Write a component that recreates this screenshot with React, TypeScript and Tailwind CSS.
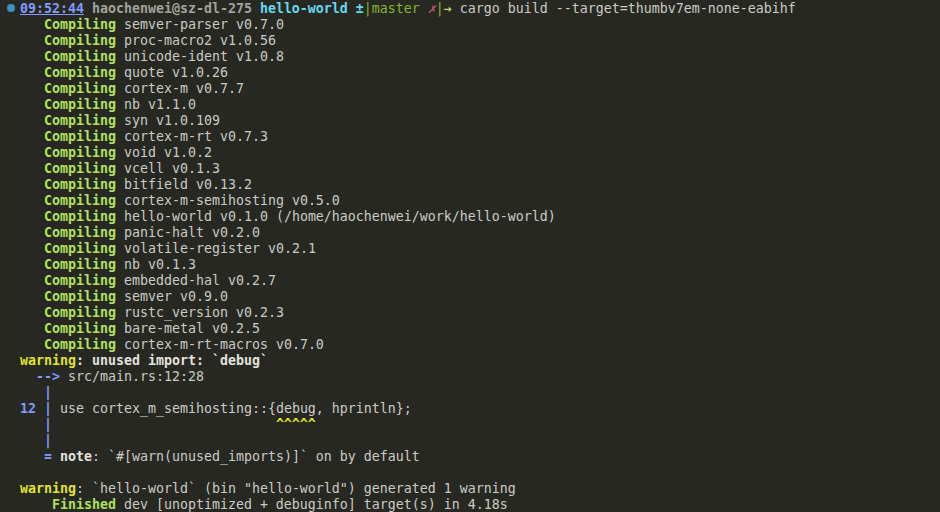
import React from "react";

const GREEN = "text-[#b1e05f]";

const crates = [
  "semver-parser v0.7.0",
  "proc-macro2 v1.0.56",
  "unicode-ident v1.0.8",
  "quote v1.0.26",
  "cortex-m v0.7.7",
  "nb v1.1.0",
  "syn v1.0.109",
  "cortex-m-rt v0.7.3",
  "void v1.0.2",
  "vcell v0.1.3",
  "bitfield v0.13.2",
  "cortex-m-semihosting v0.5.0",
  "hello-world v0.1.0 (/home/haochenwei/work/hello-world)",
  "panic-halt v0.2.0",
  "volatile-register v0.2.1",
  "nb v0.1.3",
  "embedded-hal v0.2.7",
  "semver v0.9.0",
  "rustc_version v0.2.3",
  "bare-metal v0.2.5",
  "cortex-m-rt-macros v0.7.0",
];

function Line({ children }: { children?: React.ReactNode }) {
  return <div className="h-4 leading-4 whitespace-pre">{children}</div>;
}

export default function App() {
  return (
    <div
      className="w-[940px] h-[512px] overflow-hidden bg-[#272822] text-[#cbcbc4] text-[13.29px] pl-[20px] pt-px"
      style={{ fontFamily: '"DejaVu Sans Mono", "Liberation Mono", monospace' }}
    >
      {/* prompt */}
      <div className="relative h-4 leading-4 whitespace-pre">
        <span className="absolute -left-[13px] top-[3px] w-[8px] h-[8px] rounded-full bg-[#3a93c4]" />
        <span className="font-bold underline text-[#819aff]">09:52:44</span>{" "}
        <span className="font-bold text-[#a3a39c]">haochenwei@sz-dl-275</span>{" "}
        <span className="font-bold text-[#66d9ef]">hello-world</span>{" "}
        <span className="font-bold text-[#66d9ef]">±</span>
        <span className="text-[#86b42b]">|master </span>
        <span className="italic text-[#c4547c]">✗</span>
        <span className="text-[#86b42b]">|</span>
        <span className={`font-bold ${GREEN}`}>→</span>
        {" cargo build --target=thumbv7em-none-eabihf"}
      </div>

      {crates.map((c) => (
        <Line key={c}>
          {"   "}
          <span className={`font-bold ${GREEN}`}>Compiling</span> {c}
        </Line>
      ))}

      <Line>
        <span className="font-bold text-[#e2e22e]">warning</span>
        <span className="font-bold text-[#e3e3dd]">: unused import: `debug`</span>
      </Line>
      <Line>
        {"  "}
        <span className="font-bold text-[#819aff]">--&gt;</span> src/main.rs:12:28
      </Line>
      <Line>
        <span className="font-bold text-[#819aff]">{"   |"}</span>
      </Line>
      <Line>
        <span className="font-bold text-[#819aff]">12 |</span> use cortex_m_semihosting::{"{"}debug, hprintln{"}"};
      </Line>
      <Line>
        <span className="font-bold text-[#819aff]">{"   |"}</span>
        {"                            "}
        <span className="font-bold text-[#e2e22e]">^^^^^</span>
      </Line>
      <Line>
        <span className="font-bold text-[#819aff]">{"   |"}</span>
      </Line>
      <Line>
        {"   "}
        <span className="font-bold text-[#819aff]">=</span>{" "}
        <span className="font-bold text-[#e3e3dd]">note</span>: `#[warn(unused_imports)]` on by default
      </Line>
      <Line />
      <Line>
        <span className="font-bold text-[#e2e22e]">warning</span>: `hello-world` (bin "hello-world") generated 1 warning
      </Line>
      <Line>
        {"    "}
        <span className={`font-bold ${GREEN}`}>Finished</span> dev [unoptimized + debuginfo] target(s) in 4.18s
      </Line>
    </div>
  );
}
